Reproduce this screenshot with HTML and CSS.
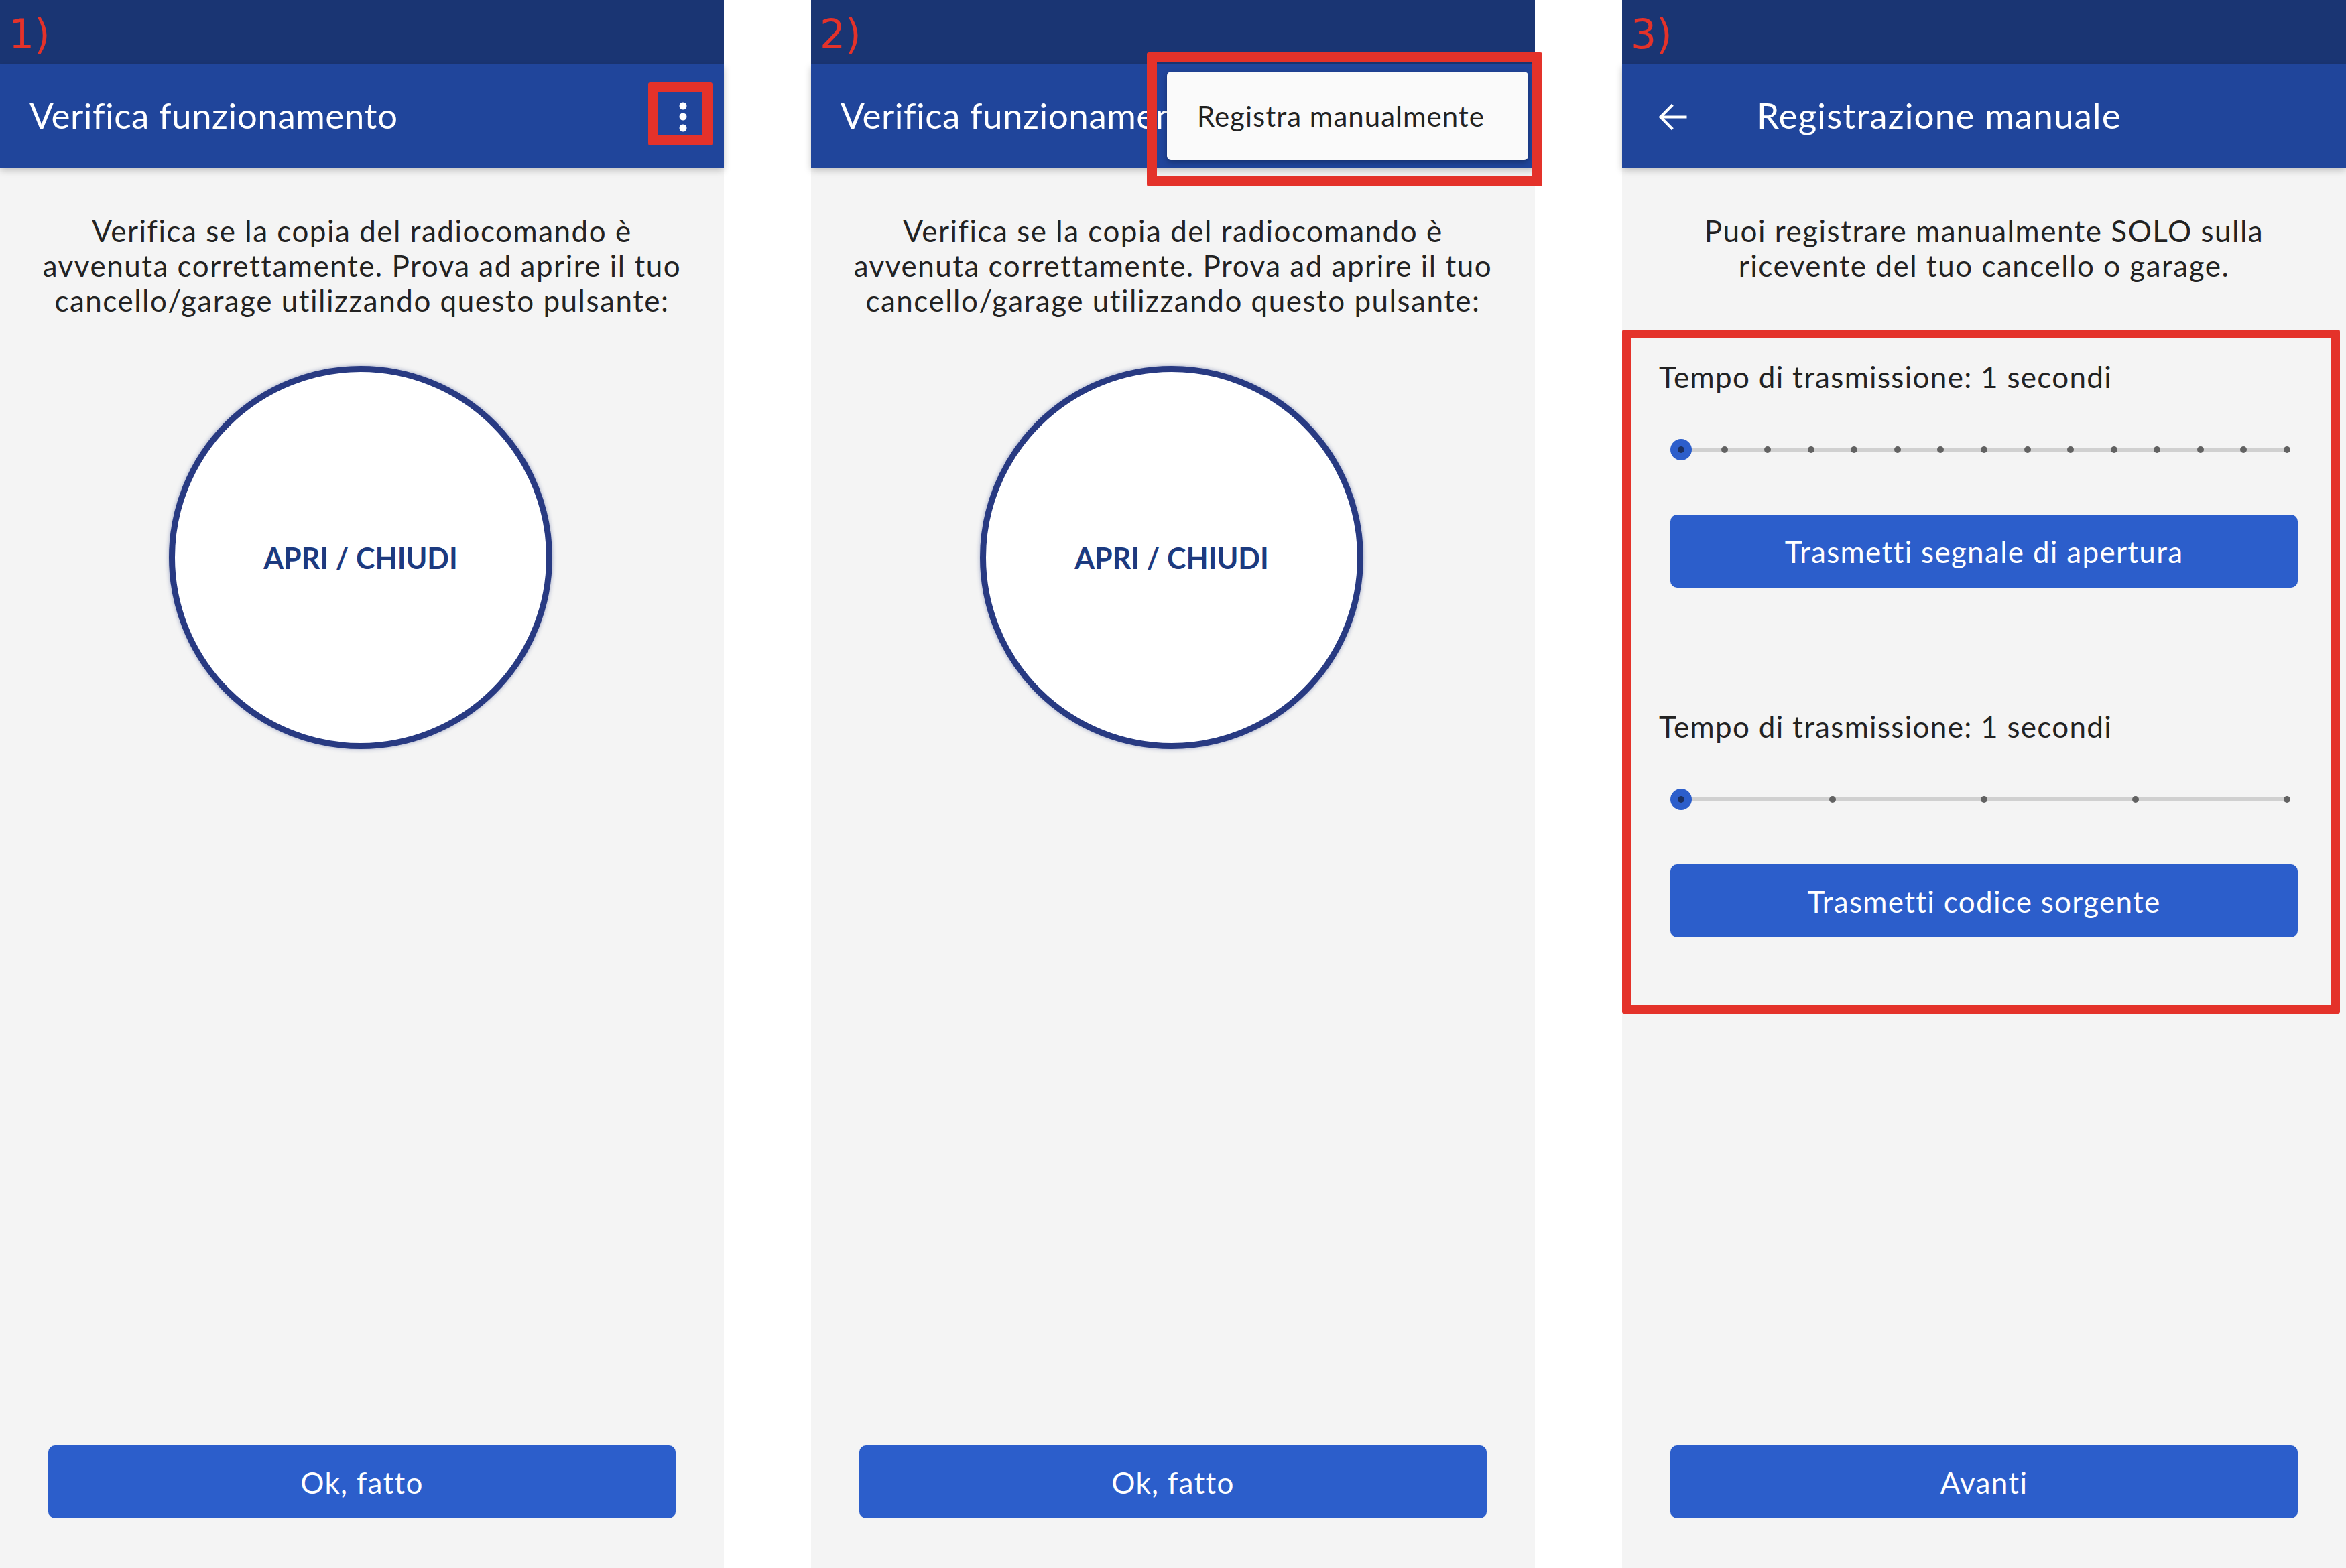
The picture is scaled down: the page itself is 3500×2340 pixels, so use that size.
FILE: index.html
```html
<!DOCTYPE html>
<html lang="it">
<head>
    <meta charset="UTF-8">
    <meta name="viewport" content="width=device-width, initial-scale=1.0">
    <title>Registrazione manuale</title>
    <link rel="stylesheet" href="styles.css">
</head>
<body>
    <div class="shots">

        <!-- 1) verifica -->
        <section class="phone">
            <div class="status"><span class="step">1)</span></div>
            <header class="appbar">
                <h1 class="title">Verifica funzionamento</h1>
                <span class="more">
                    <svg width="12" height="46" viewBox="0 0 12 46"><circle cx="6" cy="6" r="5.5" fill="#fff"/><circle cx="6" cy="22" r="5.5" fill="#fff"/><circle cx="6" cy="39" r="5.5" fill="#fff"/></svg>
                </span>
            </header>
            <main class="content">
                <p class="intro">Verifica se la copia del radiocomando è<br>avvenuta correttamente. Prova ad aprire il tuo<br>cancello/garage utilizzando questo pulsante:</p>
                <button class="round">APRI / CHIUDI</button>
            </main>
            <footer class="footer"><button class="primary">Ok, fatto</button></footer>
            <span class="mark mark-more"></span>
        </section>

        <!-- 2) menu aperto -->
        <section class="phone">
            <div class="status"><span class="step">2)</span></div>
            <header class="appbar">
                <h1 class="title">Verifica funzionamento</h1>
            </header>
            <main class="content">
                <p class="intro">Verifica se la copia del radiocomando è<br>avvenuta correttamente. Prova ad aprire il tuo<br>cancello/garage utilizzando questo pulsante:</p>
                <button class="round">APRI / CHIUDI</button>
            </main>
            <footer class="footer"><button class="primary">Ok, fatto</button></footer>
            <div class="menu"><span class="menu-item">Registra manualmente</span></div>
            <span class="mark mark-menu"></span>
        </section>

        <!-- 3) registrazione manuale -->
        <section class="phone">
            <div class="status"><span class="step">3)</span></div>
            <header class="appbar">
                <span class="back">
                    <svg width="63" height="63" viewBox="0 0 24 24"><path d="M20 11.2H6.9l5.6-5.6-1.1-1.1L4 12l7.4 7.5 1.1-1.1-5.6-5.6H20z" fill="#fff"/></svg>
                </span>
                <h1 class="title title-nav">Registrazione manuale</h1>
            </header>
            <main class="content">
                <p class="intro">Puoi registrare manualmente SOLO sulla<br>ricevente del tuo cancello o garage.</p>

                <div class="setting">
                    <div class="setting-label">Tempo di trasmissione: 1 secondi</div>
                    <div class="slider">
                        <div class="track">
                            <i></i><i></i><i></i><i></i><i></i><i></i><i></i><i></i><i></i><i></i><i></i><i></i><i></i><i></i><i></i>
                        </div>
                        <span class="thumb"></span>
                    </div>
                    <button class="primary">Trasmetti segnale di apertura</button>
                </div>

                <div class="setting">
                    <div class="setting-label">Tempo di trasmissione: 1 secondi</div>
                    <div class="slider">
                        <div class="track">
                            <i></i><i></i><i></i><i></i><i></i>
                        </div>
                        <span class="thumb"></span>
                    </div>
                    <button class="primary">Trasmetti codice sorgente</button>
                </div>
            </main>
            <footer class="footer"><button class="primary">Avanti</button></footer>
            <span class="mark mark-settings"></span>
        </section>

    </div>
</body>
</html>
```

FILE: styles.css
```css
* {
    box-sizing: border-box;
}

body {
    margin: 0;
    background: #fff;
    font-family: Lato, "Open Sans", sans-serif;
    color: #222;
}

.shots {
    display: flex;
    gap: 130px;
    width: 3500px;
    height: 2340px;
    overflow: hidden;
}

.phone {
    position: relative;
    width: 1080px;
    height: 2340px;
    flex: none;
    display: flex;
    flex-direction: column;
    background: #f4f4f4;
}

.status {
    height: 96px;
    background: #1a3573;
    padding: 17px 0 0 13px;
}

.step {
    font-family: "DejaVu Sans", sans-serif;
    font-size: 60px;
    line-height: 68px;
    color: #e4322a;
}

.appbar {
    position: relative;
    z-index: 1;
    height: 154px;
    display: flex;
    align-items: center;
    padding: 0 44px 4px;
    background: #20459b;
    box-shadow: 0 4px 10px rgba(0, 0, 0, 0.22);
}

.title {
    flex: 1;
    margin: 0;
    font-size: 53px;
    font-weight: 400;
    letter-spacing: 0.5px;
    color: #fff;
    white-space: nowrap;
}

.title-nav {
    margin-left: 94px;
    letter-spacing: 1.1px;
}

.more {
    display: flex;
    margin: 8px 11px 0 0;
}

.back {
    display: flex;
    margin-left: 0;
    margin-top: 6px;
}

.content {
    flex: 1;
    display: flex;
    flex-direction: column;
    align-items: center;
}

.intro {
    margin: 68px 0 0;
    font-size: 44px;
    line-height: 52px;
    letter-spacing: 1.5px;
    text-align: center;
    color: #222;
}

.round {
    width: 572px;
    height: 572px;
    margin: 72px 0 0 -4px;
    border: 9px solid #283a82;
    border-radius: 50%;
    background: #fff;
    box-shadow: 0 0 6px rgba(40, 58, 130, 0.45);
    font-family: inherit;
    font-size: 43px;
    font-weight: 700;
    color: #1c3a7f;
}

.footer {
    padding: 0 72px 74px;
}

.primary {
    display: block;
    width: 100%;
    height: 109px;
    border: 0;
    border-radius: 10px;
    background: #2c5ecb;
    font-family: inherit;
    font-size: 44px;
    letter-spacing: 1.3px;
    color: #fff;
}

/* sliders */
.setting {
    align-self: stretch;
    display: flex;
    flex-direction: column;
    padding: 0 72px;
    margin-top: 114px;
}

.setting + .setting {
    margin-top: 181px;
}

.setting-label {
    margin-left: -17px;
    font-size: 44px;
    line-height: 52px;
    letter-spacing: 1.3px;
    color: #222;
}

.slider {
    position: relative;
    height: 48px;
    margin: 59px 0 73px;
    padding: 0 16px;
    display: flex;
    align-items: center;
}

.track {
    flex: 1;
    height: 6px;
    background: #d0d0d0;
    display: flex;
    align-items: center;
    justify-content: space-between;
    margin: 0 -5px;
}

.track i {
    width: 10px;
    height: 10px;
    border-radius: 50%;
    background: #626262;
}

.thumb {
    position: absolute;
    left: 0;
    top: 8px;
    width: 32px;
    height: 32px;
    border-radius: 50%;
    background: #2c5ecb;
}

.thumb::after {
    content: "";
    position: absolute;
    left: 11px;
    top: 11px;
    width: 10px;
    height: 10px;
    border-radius: 50%;
    background: #1b2f60;
}

/* menu overflow */
.menu {
    position: absolute;
    z-index: 3;
    left: 531px;
    top: 107px;
    width: 539px;
    height: 132px;
    display: flex;
    align-items: center;
    padding-left: 45px;
    background: #fafafa;
    border-radius: 6px;
    box-shadow: 0 3px 8px rgba(0, 0, 0, 0.3);
}

.menu-item {
    font-size: 42px;
    letter-spacing: 1px;
    color: #222;
}

/* red annotation frames */
.mark {
    position: absolute;
    z-index: 4;
    border: 15px solid #e4322a;
    border-radius: 3px;
}

.mark-more {
    left: 967px;
    top: 123px;
    width: 96px;
    height: 94px;
}

.mark-menu {
    left: 501px;
    top: 78px;
    width: 590px;
    height: 200px;
}

.mark-settings {
    left: 0;
    top: 492px;
    width: 1071px;
    height: 1021px;
    border-width: 13px;
}
```
